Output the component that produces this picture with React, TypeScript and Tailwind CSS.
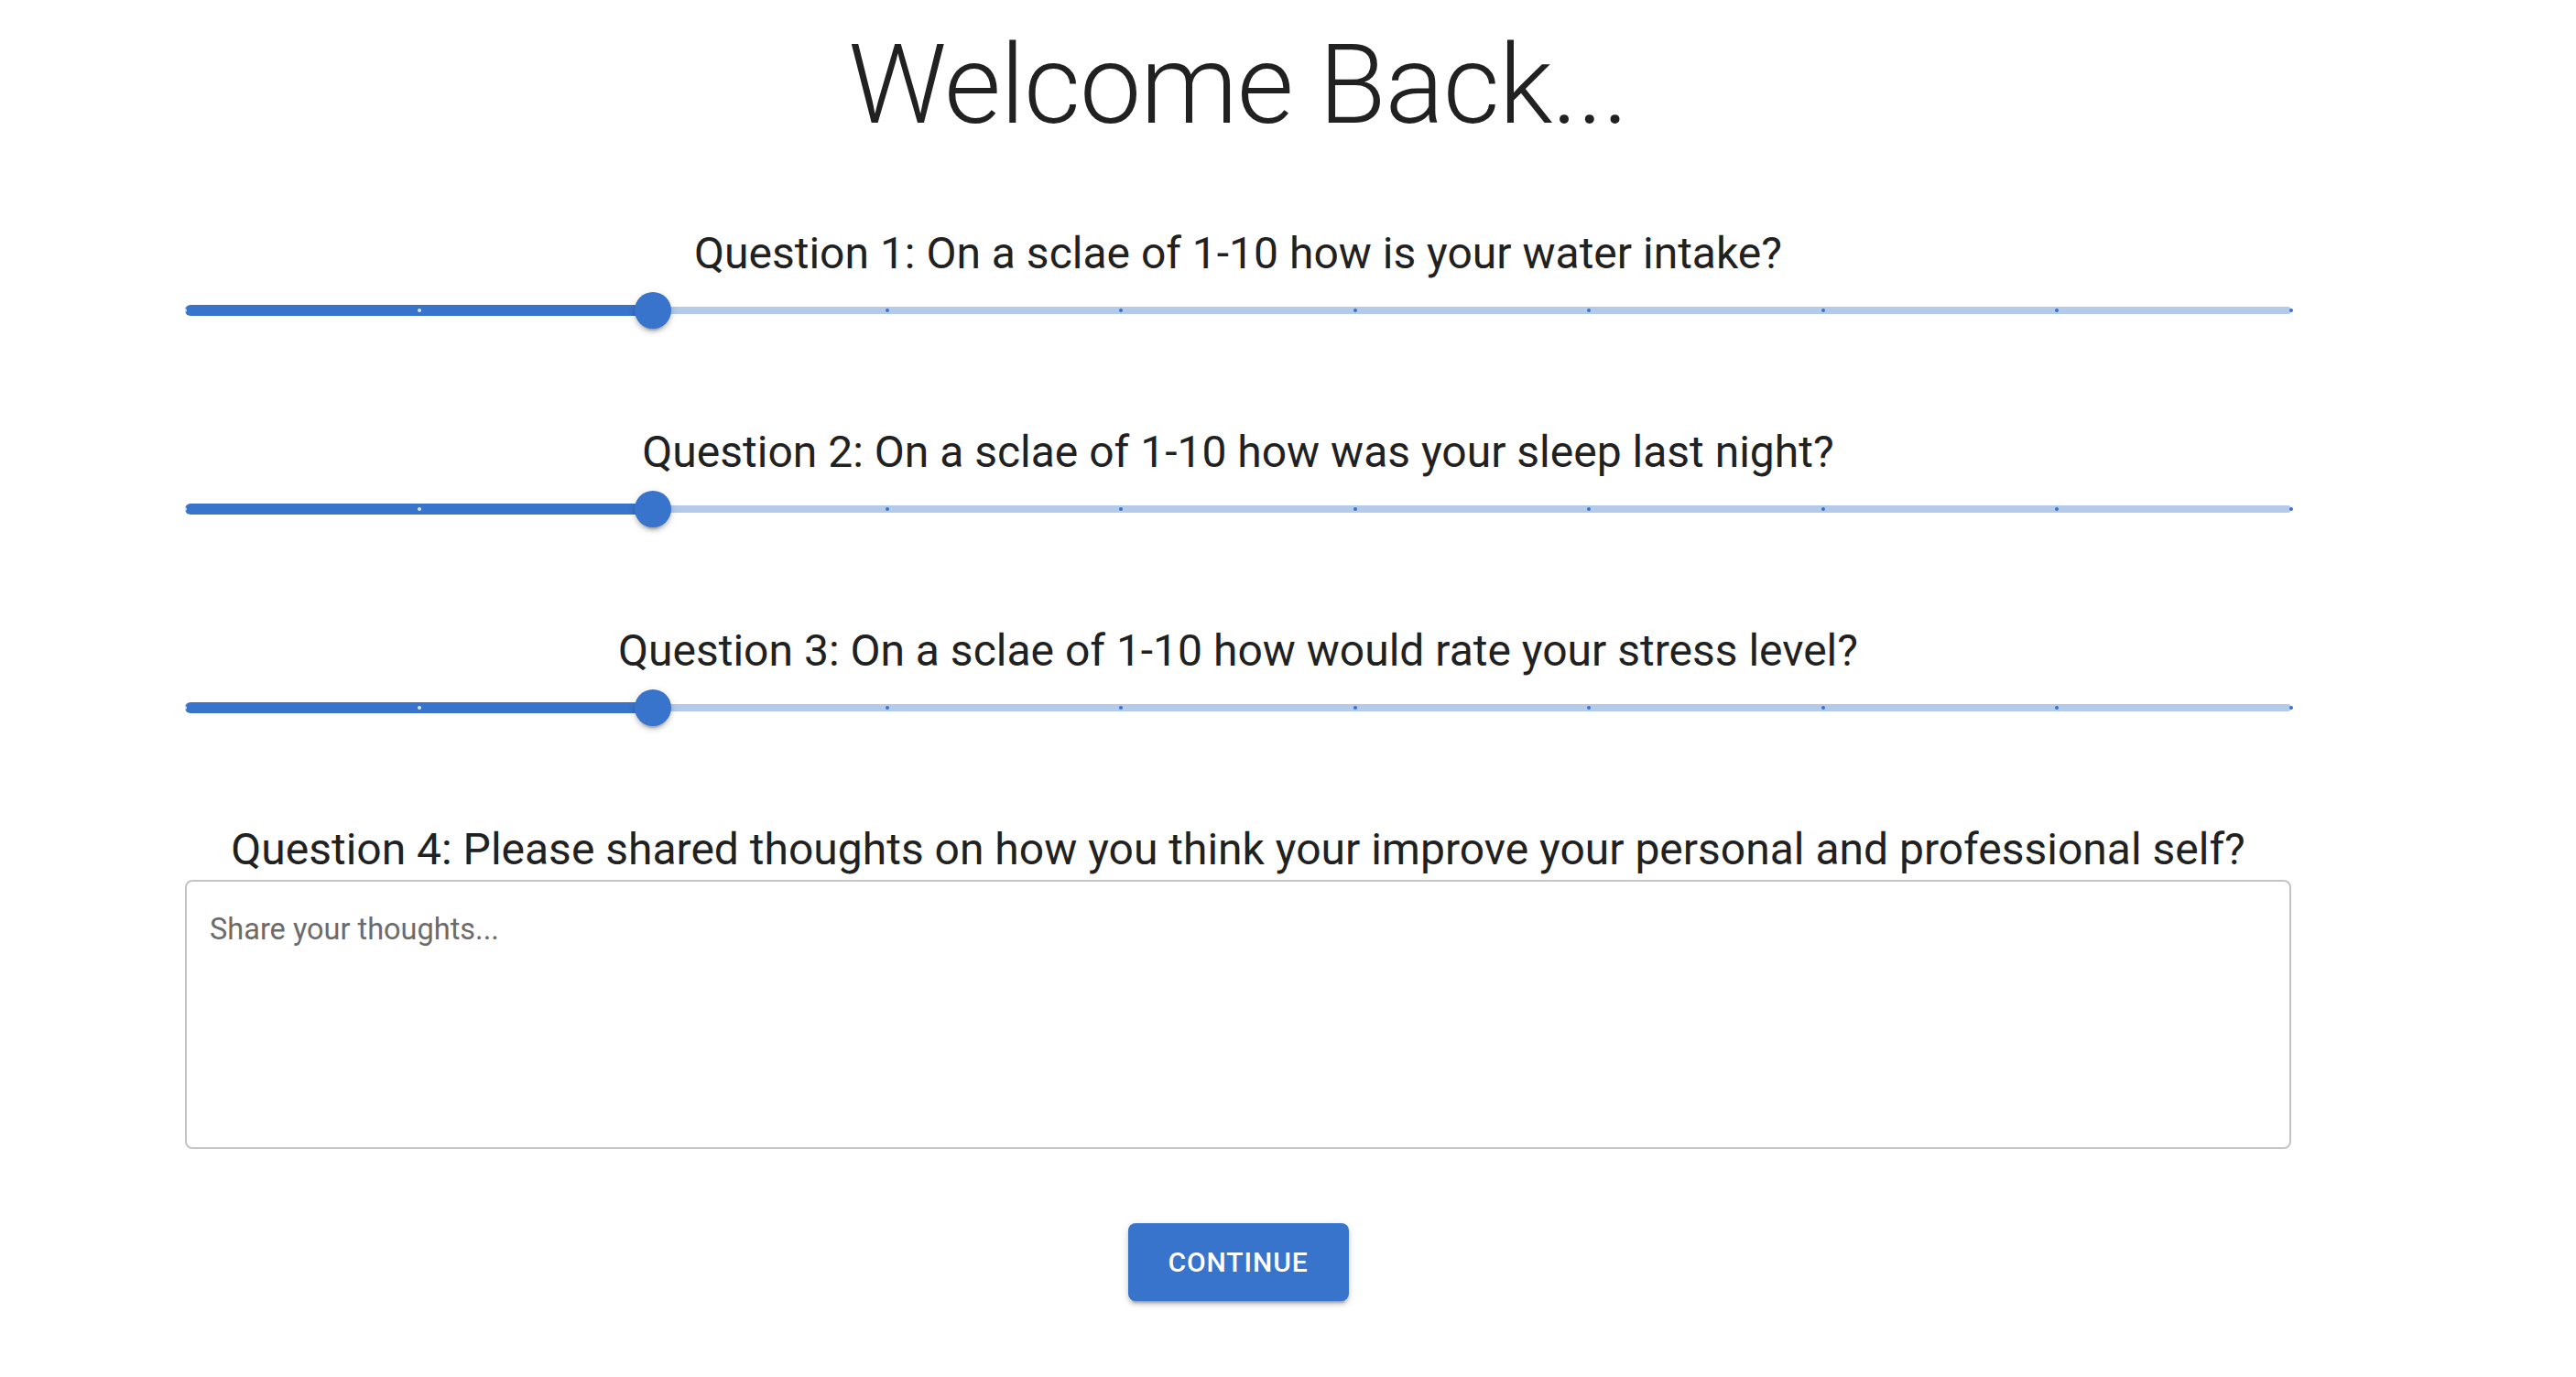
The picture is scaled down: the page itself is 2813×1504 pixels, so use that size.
import { useState } from 'react';

/* ─── Survey questions ─── */
const SLIDER_QUESTIONS = [
  'Question 1: On a sclae of 1-10 how is your water intake?',
  'Question 2: On a sclae of 1-10 how was your sleep last night?',
  'Question 3: On a sclae of 1-10 how would rate your stress level?',
];

const MIN = 1;
const MAX = 10;

/* ─── MUI-style discrete slider ─── */
function ScaleSlider({ value, onChange }: { value: number; onChange: (v: number) => void }) {
  const pct = ((value - MIN) / (MAX - MIN)) * 100;
  const marks = Array.from({ length: MAX - MIN + 1 }, (_, i) => MIN + i);

  return (
    <div
      className="relative h-[42px] w-full cursor-pointer"
      onClick={(e) => {
        const rect = e.currentTarget.getBoundingClientRect();
        const t = (e.clientX - rect.left) / rect.width;
        onChange(Math.min(MAX, Math.max(MIN, Math.round(MIN + t * (MAX - MIN)))));
      }}
    >
      {/* rail */}
      <span className="absolute inset-x-0 top-1/2 h-[8px] -translate-y-1/2 rounded-full bg-[#b3caeb]" />
      {/* active track */}
      <span
        className="absolute left-0 top-1/2 h-[12px] -translate-y-1/2 rounded-full bg-[#3874cb]"
        style={{ width: `${pct}%` }}
      />
      {/* marks */}
      {marks.map((m) => {
        const left = ((m - MIN) / (MAX - MIN)) * 100;
        return (
          <span
            key={m}
            className={`absolute top-1/2 h-[4px] w-[4px] -translate-x-1/2 -translate-y-1/2 rounded-[2px] ${
              m <= value ? 'bg-white/80' : 'bg-[#3874cb]'
            }`}
            style={{ left: `${left}%` }}
          />
        );
      })}
      {/* thumb */}
      <span
        className="absolute top-1/2 h-[40px] w-[40px] -translate-x-1/2 -translate-y-1/2 rounded-full bg-[#3874cb] shadow-[0_6px_2px_-4px_rgba(0,0,0,0.2),0_4px_4px_0_rgba(0,0,0,0.14),0_2px_10px_0_rgba(0,0,0,0.12)]"
        style={{ left: `${pct}%` }}
      />
    </div>
  );
}

export default function App() {
  const [values, setValues] = useState([3, 3, 3]);
  const [thoughts, setThoughts] = useState('');

  return (
    <div className="min-h-screen bg-white font-[family-name:Roboto,sans-serif] text-[#212121]">
      <div className="ml-[202px] flex w-[2300px] flex-col pt-[21px]">
        <h1 className="text-center text-[120px] font-light leading-[144px] tracking-[-1px]">Welcome Back...</h1>

        <div className="mt-[80px] flex flex-col gap-[102px]">
          {SLIDER_QUESTIONS.map((q, i) => (
            <div key={q} className="flex flex-col gap-[9px]">
              <p className="text-center text-[48px] leading-[64px]">{q}</p>
              <ScaleSlider
                value={values[i]}
                onChange={(v) => setValues((prev) => prev.map((p, j) => (j === i ? v : p)))}
              />
            </div>
          ))}
        </div>

        <p className="mt-[102px] text-center text-[48px] leading-[64px]">
          Question 4: Please shared thoughts on how you think your improve your personal and professional self?
        </p>
        <textarea
          value={thoughts}
          onChange={(e) => setThoughts(e.target.value)}
          placeholder="Share your thoughts..."
          className="mt-[1px] h-[294px] w-full resize-none rounded-[8px] border-2 border-[#c4c4c4] pl-[25px] pr-[25px] pt-[29px] text-[32.5px] leading-[46px] text-[#212121] outline-none placeholder:text-[#6b6b6b] focus:border-[#3874cb]"
        />

        <button className="mx-auto mt-[81px] h-[85px] w-[241px] rounded-[8px] bg-[#3874cb] text-[30px] font-medium uppercase tracking-[0.92px] text-white shadow-[0_6px_2px_-4px_rgba(0,0,0,0.2),0_4px_4px_0_rgba(0,0,0,0.14),0_2px_10px_0_rgba(0,0,0,0.12)]">
          Continue
        </button>
      </div>
    </div>
  );
}
